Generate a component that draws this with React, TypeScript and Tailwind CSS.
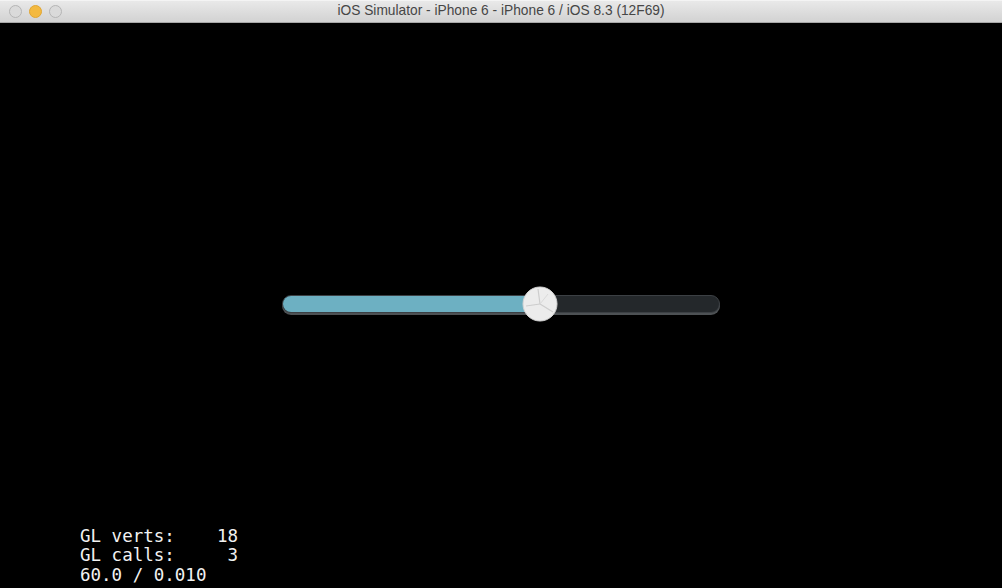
import { useState } from 'react'

const STATS = [
  { label: 'GL verts:', value: '18' },
  { label: 'GL calls:', value: '3' },
]

function TrafficLight({ active }: { active?: boolean }) {
  if (active) {
    return <span className="block h-[13px] w-[13px] rounded-full bg-[#f3b940] border border-[#e0a532]" />
  }
  return (
    <span className="block h-[13px] w-[13px] rounded-full border border-[#b5b5b5] bg-[#dadada]" />
  )
}

function Thumb() {
  return (
    <svg width="36" height="36" viewBox="0 0 36 36">
      <circle cx="18" cy="18" r="17" fill="#ececec" stroke="#d4d4d4" strokeWidth="1" />
      <path d="M18 18 L16 3" stroke="#cdcdcd" strokeWidth="1.2" />
      <path d="M18 18 L31 26" stroke="#cdcdcd" strokeWidth="1.2" />
      <path d="M18 18 L4 20" stroke="#cdcdcd" strokeWidth="1.2" />
      <path d="M18 18 L26 8" stroke="#dadada" strokeWidth="1" />
    </svg>
  )
}

export default function App() {
  const [value] = useState(0.589)

  return (
    <div className="flex h-[588px] w-[1002px] flex-col overflow-hidden bg-black">
      <header className="relative flex h-[23px] shrink-0 items-center border-t border-[#f4f4f4] border-b border-b-[#a8a8a8] bg-gradient-to-b from-[#e9e9e9] to-[#d2d2d2]">
        <div className="flex items-center gap-[7px] pl-[9px]">
          <TrafficLight />
          <TrafficLight active />
          <TrafficLight />
        </div>
        <div
          className="absolute inset-0 flex items-center justify-center text-[13.75px] text-[#464646]"
          style={{ fontFamily: '"Liberation Sans", Arial, sans-serif' }}
        >
          iOS Simulator - iPhone 6 - iPhone 6 / iOS 8.3 (12F69)
        </div>
      </header>

      <main className="flex flex-1 flex-col">
        <div className="pl-[282px] pt-[272px]">
          <div className="relative h-[20px] w-[438px]">
            <div className="h-[18px] w-full overflow-hidden rounded-full border border-[#3c4044] bg-[#24282b] shadow-[0_2px_0_#4d5154]">
              <div className="h-full bg-[#6db0c2]" style={{ width: `${value * 100}%` }} />
            </div>
            <div
              className="absolute top-[-9px] -translate-x-1/2"
              style={{ left: `${value * 100}%` }}
            >
              <Thumb />
            </div>
          </div>
        </div>

        <div
          className="mt-auto pb-[3px] pl-[80px] text-[17.5px] leading-[19.5px] text-[#f2f2f2] whitespace-pre"
          style={{ fontFamily: '"DejaVu Sans Mono", "Liberation Mono", monospace' }}
        >
          {STATS.map((s) => (
            <div key={s.label}>{s.label + s.value.padStart(6, ' ')}</div>
          ))}
          <div>60.0 / 0.010</div>
        </div>
      </main>
    </div>
  )
}
